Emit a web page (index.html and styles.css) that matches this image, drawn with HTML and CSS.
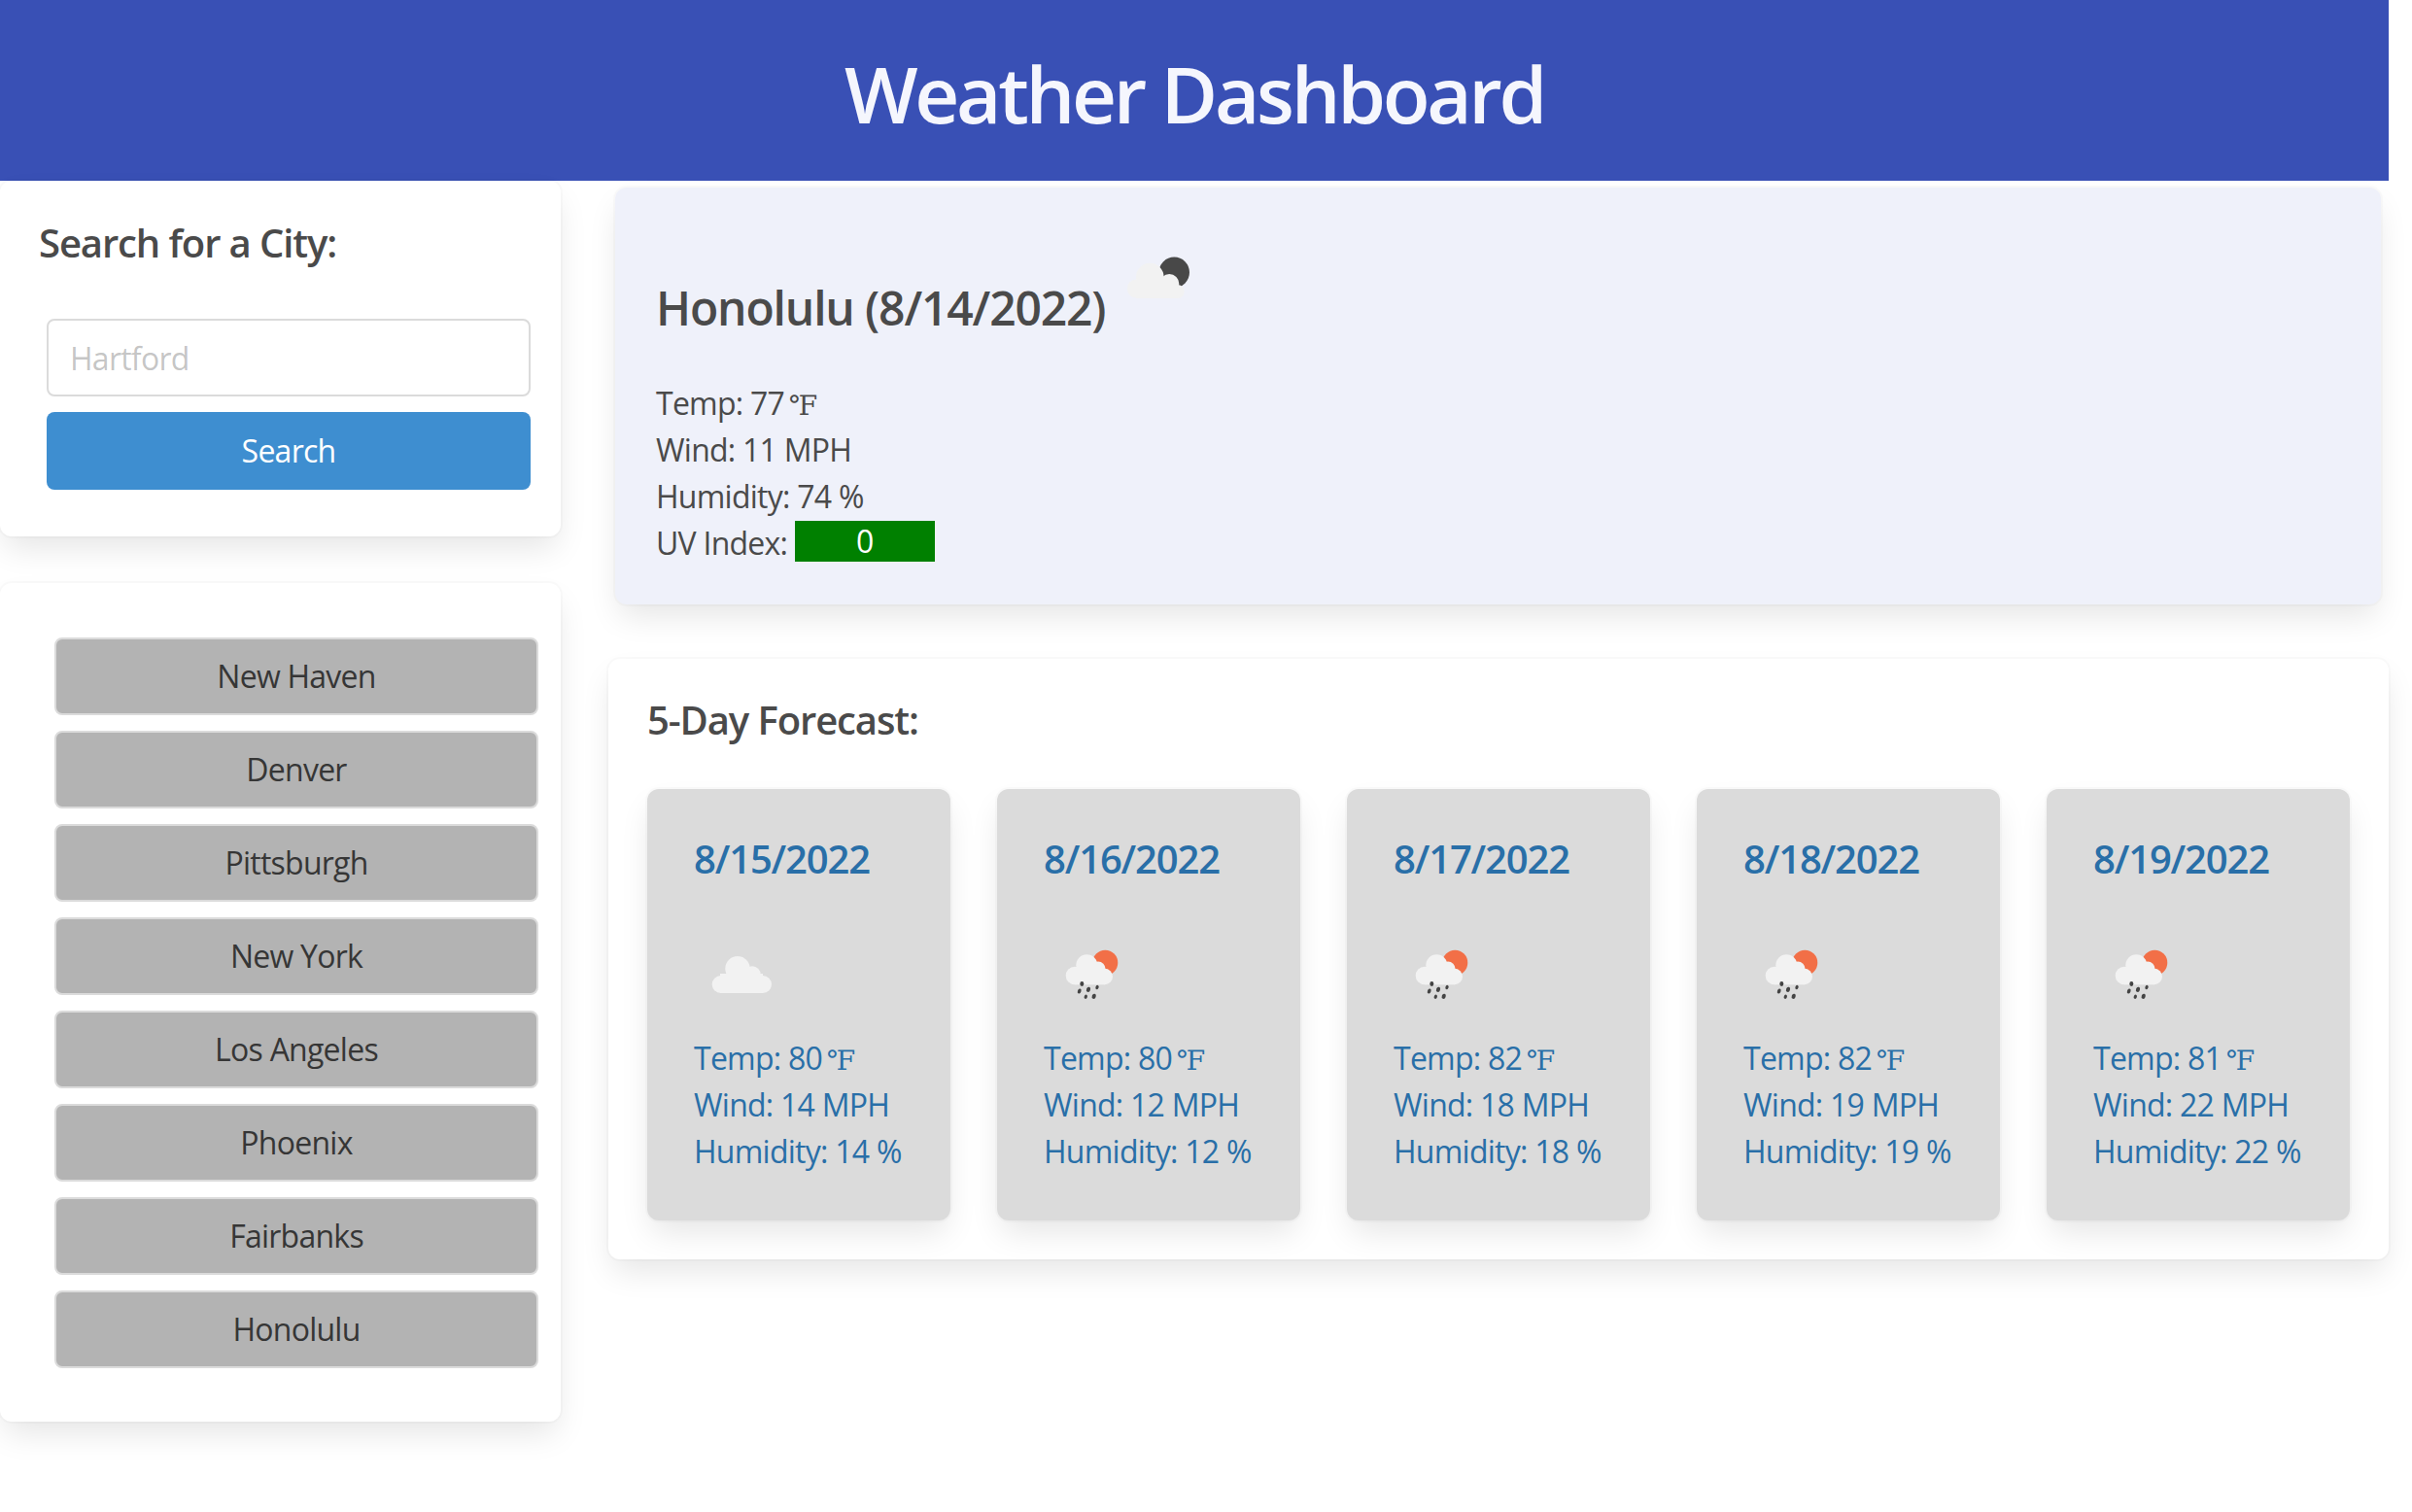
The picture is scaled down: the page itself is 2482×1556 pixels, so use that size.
FILE: index.html
```html
<!DOCTYPE html>
<html lang="en">
<head>
    <meta charset="UTF-8">
    <meta name="viewport" content="width=device-width, initial-scale=1.0">
    <title>Weather Dashboard</title>
    <link rel="stylesheet" href="styles.css">
</head>
<body>
    <svg class="sprites" width="0" height="0" aria-hidden="true">
        <symbol id="icon-cloud" viewBox="0 0 100 100">
            <g fill="#f2f2f2">
                <circle cx="27.7" cy="61" r="9"/>
                <circle cx="45" cy="44.7" r="12.7"/>
                <circle cx="60" cy="51" r="8.7"/>
                <circle cx="71" cy="61" r="9"/>
                <rect x="27" y="50" width="44" height="20"/>
            </g>
        </symbol>
        <symbol id="icon-rain" viewBox="0 0 100 100">
            <circle cx="63.3" cy="38.7" r="13" fill="#f26f47"/>
            <g fill="#f2f2f2">
                <circle cx="32" cy="52" r="9.3"/>
                <circle cx="44.3" cy="41.3" r="11"/>
                <circle cx="56" cy="45" r="7.5"/>
                <circle cx="62.7" cy="53" r="8.3"/>
                <rect x="32" y="48" width="31" height="13.3"/>
            </g>
            <g fill="#444">
                <ellipse cx="39.3" cy="60.5" rx="2" ry="2.4"/>
                <ellipse cx="36.7" cy="68" rx="1.8" ry="2.6" transform="rotate(20 36.7 68)"/>
                <ellipse cx="46" cy="66.3" rx="2" ry="2.6" transform="rotate(20 46 66.3)"/>
                <ellipse cx="55" cy="64" rx="1.6" ry="2.2" transform="rotate(20 55 64)"/>
                <ellipse cx="43.3" cy="73.7" rx="1.6" ry="2.2" transform="rotate(20 43.3 73.7)"/>
                <ellipse cx="51.7" cy="73.3" rx="2" ry="2.6" transform="rotate(20 51.7 73.3)"/>
            </g>
        </symbol>
        <symbol id="icon-night" viewBox="0 0 100 100">
            <circle cx="68.3" cy="45.3" r="15.7" fill="#484848"/>
            <g fill="#f2f2f2">
                <circle cx="29.3" cy="62" r="9.5"/>
                <circle cx="43.3" cy="50" r="14.3"/>
                <circle cx="63.3" cy="57" r="10"/>
                <circle cx="71.7" cy="65" r="7"/>
                <rect x="29" y="55" width="43" height="17"/>
            </g>
        </symbol>
    </svg>

    <div class="page">
        <header class="site-header">
            <h1>Weather Dashboard</h1>
        </header>

        <div class="columns">
            <aside class="sidebar">
                <section class="box search-box">
                    <h2 class="title">Search for a City:</h2>
                    <form class="search-form">
                        <input class="input" type="text" placeholder="Hartford">
                        <button class="btn btn-search" type="button">Search</button>
                    </form>
                </section>

                <section class="box history-box">
                    <button class="btn btn-city" type="button">New Haven</button>
                    <button class="btn btn-city" type="button">Denver</button>
                    <button class="btn btn-city" type="button">Pittsburgh</button>
                    <button class="btn btn-city" type="button">New York</button>
                    <button class="btn btn-city" type="button">Los Angeles</button>
                    <button class="btn btn-city" type="button">Phoenix</button>
                    <button class="btn btn-city" type="button">Fairbanks</button>
                    <button class="btn btn-city" type="button">Honolulu</button>
                </section>
            </aside>

            <main class="content">
                <section class="box current">
                    <h2 class="current-title">Honolulu (8/14/2022)<svg class="icon icon-current"><use href="#icon-night"/></svg></h2>
                    <p>Temp: 77 <span class="deg">℉</span></p>
                    <p>Wind: 11 MPH</p>
                    <p>Humidity: 74 %</p>
                    <p>UV Index: <span class="uv">0</span></p>
                </section>

                <section class="box forecast">
                    <h2 class="title">5-Day Forecast:</h2>
                    <div class="forecast-row">
                        <article class="day">
                            <h3>8/15/2022</h3>
                            <svg class="icon"><use href="#icon-cloud"/></svg>
                            <p>Temp: 80 <span class="deg">℉</span></p>
                            <p>Wind: 14 MPH</p>
                            <p>Humidity: 14 %</p>
                        </article>
                        <article class="day">
                            <h3>8/16/2022</h3>
                            <svg class="icon"><use href="#icon-rain"/></svg>
                            <p>Temp: 80 <span class="deg">℉</span></p>
                            <p>Wind: 12 MPH</p>
                            <p>Humidity: 12 %</p>
                        </article>
                        <article class="day">
                            <h3>8/17/2022</h3>
                            <svg class="icon"><use href="#icon-rain"/></svg>
                            <p>Temp: 82 <span class="deg">℉</span></p>
                            <p>Wind: 18 MPH</p>
                            <p>Humidity: 18 %</p>
                        </article>
                        <article class="day">
                            <h3>8/18/2022</h3>
                            <svg class="icon"><use href="#icon-rain"/></svg>
                            <p>Temp: 82 <span class="deg">℉</span></p>
                            <p>Wind: 19 MPH</p>
                            <p>Humidity: 19 %</p>
                        </article>
                        <article class="day">
                            <h3>8/19/2022</h3>
                            <svg class="icon"><use href="#icon-rain"/></svg>
                            <p>Temp: 81 <span class="deg">℉</span></p>
                            <p>Wind: 22 MPH</p>
                            <p>Humidity: 22 %</p>
                        </article>
                    </div>
                </section>
            </main>
        </div>
    </div>
</body>
</html>
```

FILE: styles.css
```css
* {
    box-sizing: border-box;
}
body {
    margin: 0;
    background-color: #fff;
    color: #4a4a4a;
    font-family: "Open Sans", sans-serif;
    font-size: 32px;
    line-height: 48px;
    letter-spacing: -0.75px;
}
h1, h2, h3, p {
    margin: 0;
}
.sprites {
    position: absolute;
}
.page {
    width: 2458px;
    min-height: 100vh;
}
.site-header {
    height: 186px;
    background-color: #3950b5;
    color: #f5f6fd;
    text-align: center;
}
.site-header h1 {
    font-size: 80px;
    font-weight: 600;
    letter-spacing: -3.3px;
    line-height: 192px;
    height: 186px;
}
.columns {
    display: flex;
    gap: 49px;
}
.sidebar {
    width: 577px;
    flex-shrink: 0;
}
.content {
    flex: 1;
    padding-top: 7px;
}
.box {
    background-color: #fff;
    border-radius: 12px;
    box-shadow: 0 16px 32px -4px rgba(10, 10, 10, 0.1), 0 0 0 2px rgba(10, 10, 10, 0.02);
}
.title {
    font-size: 40px;
    font-weight: 600;
    letter-spacing: -1.1px;
    line-height: 45px;
}
.search-box {
    height: 366px;
    padding: 41px 31px 48px 40px;
}
.search-form {
    display: flex;
    flex-direction: column;
    gap: 16px;
    margin: 56px 0 0 8px;
}
.input {
    height: 80px;
    padding: 0 22px;
    border: 2px solid #dbdbdb;
    border-radius: 8px;
    color: #363636;
    font: inherit;
    letter-spacing: inherit;
}
.input::placeholder {
    color: rgba(54, 54, 54, 0.3);
}
.btn {
    display: block;
    width: 100%;
    height: 80px;
    border-radius: 8px;
    font: inherit;
    letter-spacing: inherit;
    text-align: center;
    cursor: pointer;
}
.btn-search {
    border: 0;
    background-color: #3e8ed0;
    color: #fff;
}
.history-box {
    display: flex;
    flex-direction: column;
    gap: 16px;
    height: 863px;
    margin-top: 48px;
    padding: 56px 23px 0 56px;
}
.btn-city {
    border: 2px solid #dbdbdb;
    background-color: #b3b3b3;
    color: #363636;
}
.current {
    height: 429px;
    margin-right: 8px;
    margin-left: 7px;
    padding: 42px 42px;
    background-color: #eff1fa;
}
.current-title {
    font-size: 48px;
    font-weight: 600;
    letter-spacing: -1.15px;
    line-height: 60px;
    margin-bottom: 44px;
}
.icon {
    display: block;
    width: 100px;
    height: 100px;
    filter: blur(0.6px);
}
.icon-current {
    display: inline-block;
    margin-left: 3px;
}
.deg {
    margin-left: -3px;
    font-family: "DejaVu Serif", serif;
    font-size: 28px;
    letter-spacing: -0.08em;
    line-height: 1;
}
.uv {
    display: inline-block;
    width: 144px;
    height: 42px;
    background-color: #008000;
    color: #fff;
    line-height: 42px;
    text-align: center;
    vertical-align: 2px;
}
.forecast {
    height: 618px;
    margin-top: 56px;
    padding: 40px;
}
.forecast-row {
    display: flex;
    gap: 48px;
    margin-top: 49px;
}
.day {
    width: 312px;
    height: 444px;
    padding: 48px;
    border-radius: 12px;
    background-color: #dbdbdb;
    color: #296fa8;
    box-shadow: 0 16px 32px -4px rgba(10, 10, 10, 0.1), 0 0 0 2px rgba(10, 10, 10, 0.02);
}
.day h3 {
    font-size: 40px;
    font-weight: 600;
    letter-spacing: -1.15px;
    line-height: 48px;
}
.day .icon {
    margin: 44px 0 13px;
}
```
